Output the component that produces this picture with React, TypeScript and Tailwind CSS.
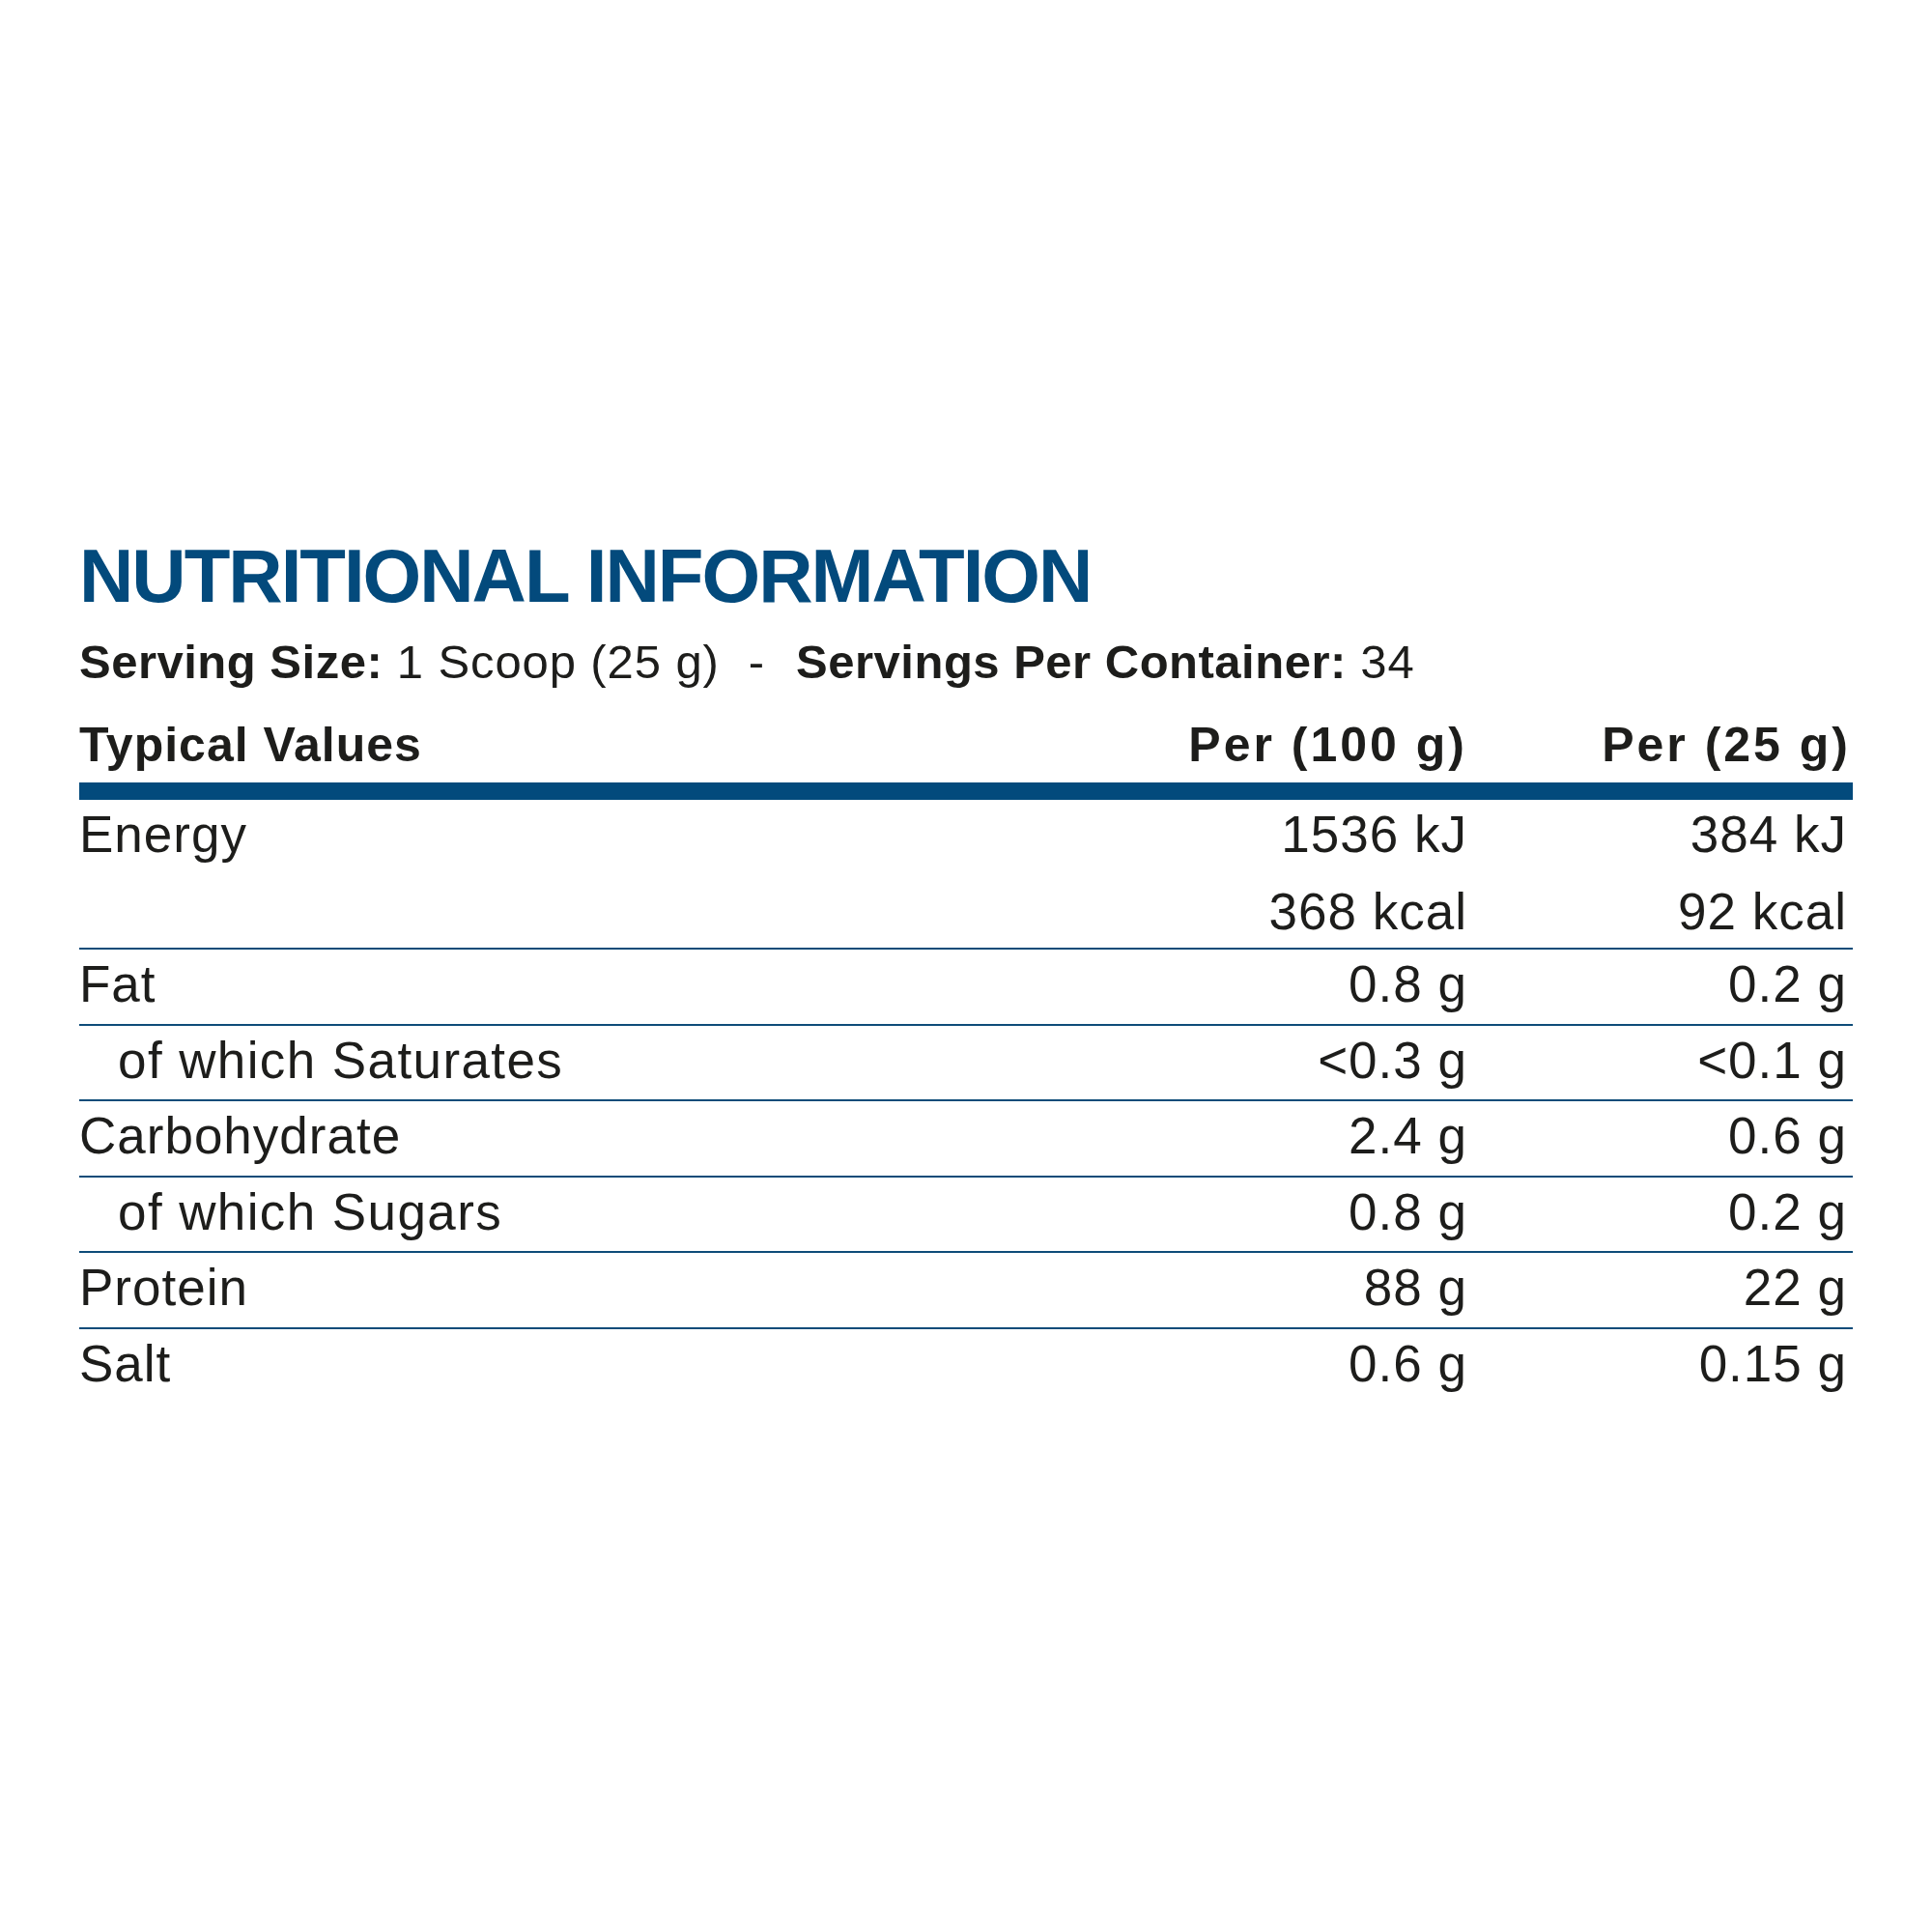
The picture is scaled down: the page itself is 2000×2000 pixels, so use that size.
type Row = { label: string; per100: string; perServing: string; sub?: boolean };

const rows: Row[] = [
  { label: "Fat", per100: "0.8 g", perServing: "0.2 g" },
  { label: "of which Saturates", per100: "<0.3 g", perServing: "<0.1 g", sub: true },
  { label: "Carbohydrate", per100: "2.4 g", perServing: "0.6 g" },
  { label: "of which Sugars", per100: "0.8 g", perServing: "0.2 g", sub: true },
  { label: "Protein", per100: "88 g", perServing: "22 g" },
  { label: "Salt", per100: "0.6 g", perServing: "0.15 g" },
];

const font = "font-['Liberation_Sans',Arial,sans-serif]";

export default function App() {
  return (
    <div className={`w-[2000px] h-[2000px] bg-white text-[#1d1d1b] ${font}`}>
      <div className="w-[1836px] ml-[82px] pt-[557px] flex flex-col">
        <h1 className="text-[78px] leading-[78px] font-bold tracking-[-2px] text-[#034a7c]">
          NUTRITIONAL INFORMATION
        </h1>

        <p className="mt-[26px] text-[49px] leading-[49px] flex items-baseline whitespace-pre">
          <span className="font-bold tracking-[0.5px]">Serving Size:</span>
          <span className="tracking-[0.9px]"> 1 Scoop (25 g)</span>
          <span className="ml-[30px]">-</span>
          <span className="ml-[33px] font-bold tracking-[0.5px]">Servings Per Container:</span>
          <span className="tracking-[0.9px]"> 34</span>
        </p>

        <div className="mt-[36px] grid grid-cols-[1fr_320px_399px] text-[50px] leading-[50px] font-bold">
          <span className="tracking-[1px]">Typical Values</span>
          <span className="text-right tracking-[3px]">Per (100 g)</span>
          <span className="text-right tracking-[3px] pr-[2px]">Per (25 g)</span>
        </div>

        <div className="mt-[14px] h-[18px] bg-[#034a7c]" />

        <div className="text-[53px] leading-[53px] tracking-[1px]">
          <div className="h-[155px] pt-[9px] border-b-2 border-[#0e4c79] grid grid-cols-[1fr_320px_399px]">
            <span>Energy</span>
            <div className="flex flex-col gap-[27px] text-right">
              <span>1536 kJ</span>
              <span>368 kcal</span>
            </div>
            <div className="flex flex-col gap-[27px] text-right pr-[6px]">
              <span>384 kJ</span>
              <span>92 kcal</span>
            </div>
          </div>

          {rows.map((r, i) => (
            <div
              key={r.label}
              className={`h-[78.5px] pt-[9px] grid grid-cols-[1fr_320px_399px] ${
                i < rows.length - 1 ? "border-b-2 border-[#0e4c79]" : ""
              }`}
            >
              <span className={r.sub ? "pl-[40px] tracking-[1.4px]" : ""}>{r.label}</span>
              <span className="text-right">{r.per100}</span>
              <span className="text-right pr-[6px]">{r.perServing}</span>
            </div>
          ))}
        </div>
      </div>
    </div>
  );
}
